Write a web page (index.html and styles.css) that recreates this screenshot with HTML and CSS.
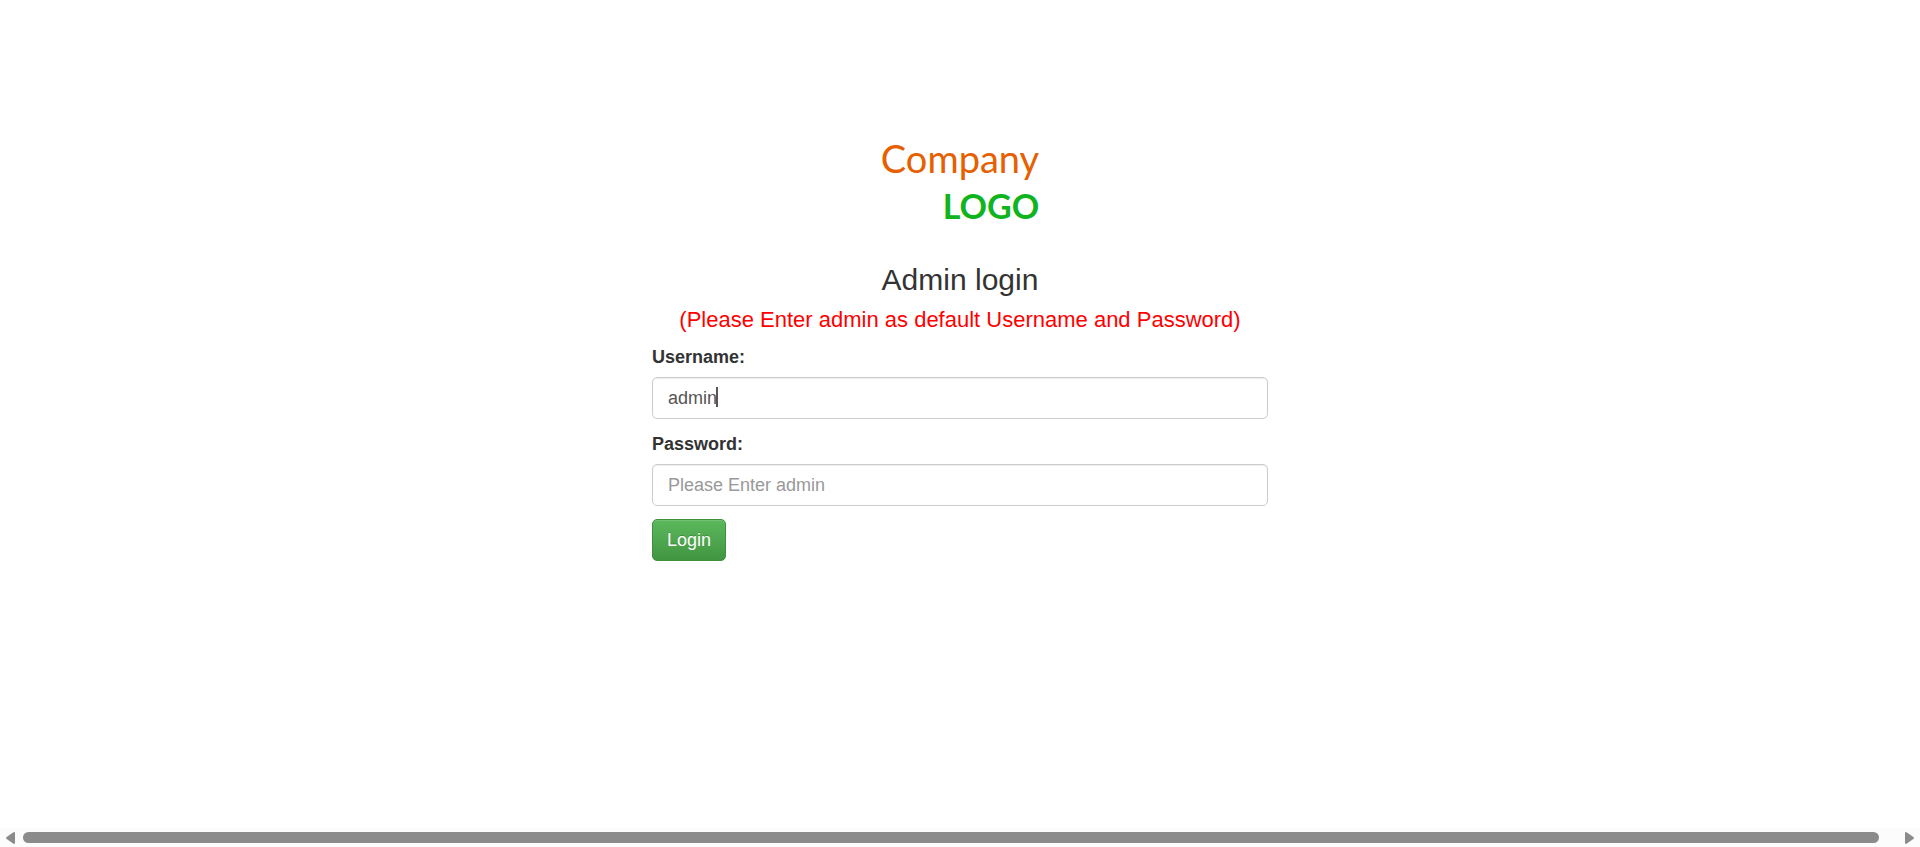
FILE: index.html
```html
<!DOCTYPE html>
<html lang="en">
<head>
<meta charset="utf-8">
<title>Admin login</title>
<link rel="stylesheet" href="styles.css">
</head>
<body>
<main class="page">
  <form class="login">
    <div class="logo" role="img" aria-label="Company logo">
      <span class="logo-company">Company</span>
      <span class="logo-mark">LOGO</span>
    </div>
    <h1 class="title">Admin login</h1>
    <p class="hint">(Please Enter admin as default Username and Password)</p>
    <div class="field">
      <label class="label" for="username">Username:</label>
      <div class="control">
        <input class="input" id="username" type="text" value="admin">
        <span class="caret"></span>
      </div>
    </div>
    <div class="field">
      <label class="label" for="password">Password:</label>
      <input class="input" id="password" type="password" placeholder="Please Enter admin">
    </div>
    <button class="button" type="button">Login</button>
  </form>
</main>
<div class="scrollbar" aria-hidden="true">
  <svg class="arrow" width="9" height="12" viewBox="0 0 9 12"><path d="M9 1.2V10.8Q9 12 7.8 12L.6 7Q-.4 6 .6 5L7.8 0Q9 0 9 1.2Z"/></svg>
  <div class="track"><div class="thumb"></div></div>
  <svg class="arrow" width="9" height="12" viewBox="0 0 9 12"><path d="M0 1.2V10.8Q0 12 1.2 12L8.4 7Q9.4 6 8.4 5L1.2 0Q0 0 0 1.2Z"/></svg>
</div>
</body>
</html>
```
FILE: styles.css
```css
* {
  box-sizing: border-box;
}

body {
  display: flex;
  flex-direction: column;
  min-height: 100vh;
  margin: 0;
  background: #fff;
  color: #333;
  font: 18px/24px "Liberation Sans", Arial, sans-serif;
}

.page {
  flex: 1;
  padding: 134px 16px 32px;
}

.login {
  width: 100%;
  max-width: 616px;
  margin: 0 auto;
}

.logo {
  display: flex;
  flex-direction: column;
  align-items: flex-end;
  width: max-content;
  margin: 0 auto;
  font-family: Lato, sans-serif;
  line-height: 48px;
}

.logo-company {
  color: #e65f00;
  font-size: 38px;
}

.logo-mark {
  color: #0fb41f;
  font-size: 34px;
  font-weight: 700;
}

.title {
  margin: 33px 0 11px;
  font-size: 30px;
  font-weight: 400;
  line-height: 33px;
  text-align: center;
}

.hint {
  margin: 0 0 13px;
  color: #f00;
  font-size: 22px;
  line-height: 25px;
  text-align: center;
}

.field {
  margin-bottom: 13px;
}

.label {
  display: block;
  margin-bottom: 8px;
  font-weight: 700;
}

.control {
  position: relative;
}

.input {
  display: block;
  width: 100%;
  height: 42px;
  padding: 8px 15px;
  border: 1px solid #ccc;
  border-radius: 5px;
  background: #fff;
  box-shadow: inset 0 1px 1px rgba(0, 0, 0, 0.075);
  color: #555;
  font: inherit;
}

.input::placeholder {
  color: #999;
  opacity: 1;
}

.caret {
  position: absolute;
  top: 10px;
  left: 64px;
  width: 2px;
  height: 20px;
  background: #555;
}

.button {
  height: 42px;
  padding: 0 14px;
  border: 1px solid #3e8f3e;
  border-radius: 5px;
  background: linear-gradient(#5cb85c, #419641);
  box-shadow: inset 0 1px 0 rgba(255, 255, 255, 0.15);
  color: #fff;
  font: inherit;
  text-shadow: 0 -1px 0 rgba(0, 0, 0, 0.2);
}

.scrollbar {
  display: flex;
  align-items: center;
  height: 19px;
  padding: 0 6px;
  background: #fcfcfc;
}

.arrow {
  fill: #8b8b8b;
}

.track {
  flex: 1;
  padding: 0 26px 0 8px;
}

.thumb {
  height: 11px;
  border-radius: 6px;
  background: #8b8b8b;
}
```
